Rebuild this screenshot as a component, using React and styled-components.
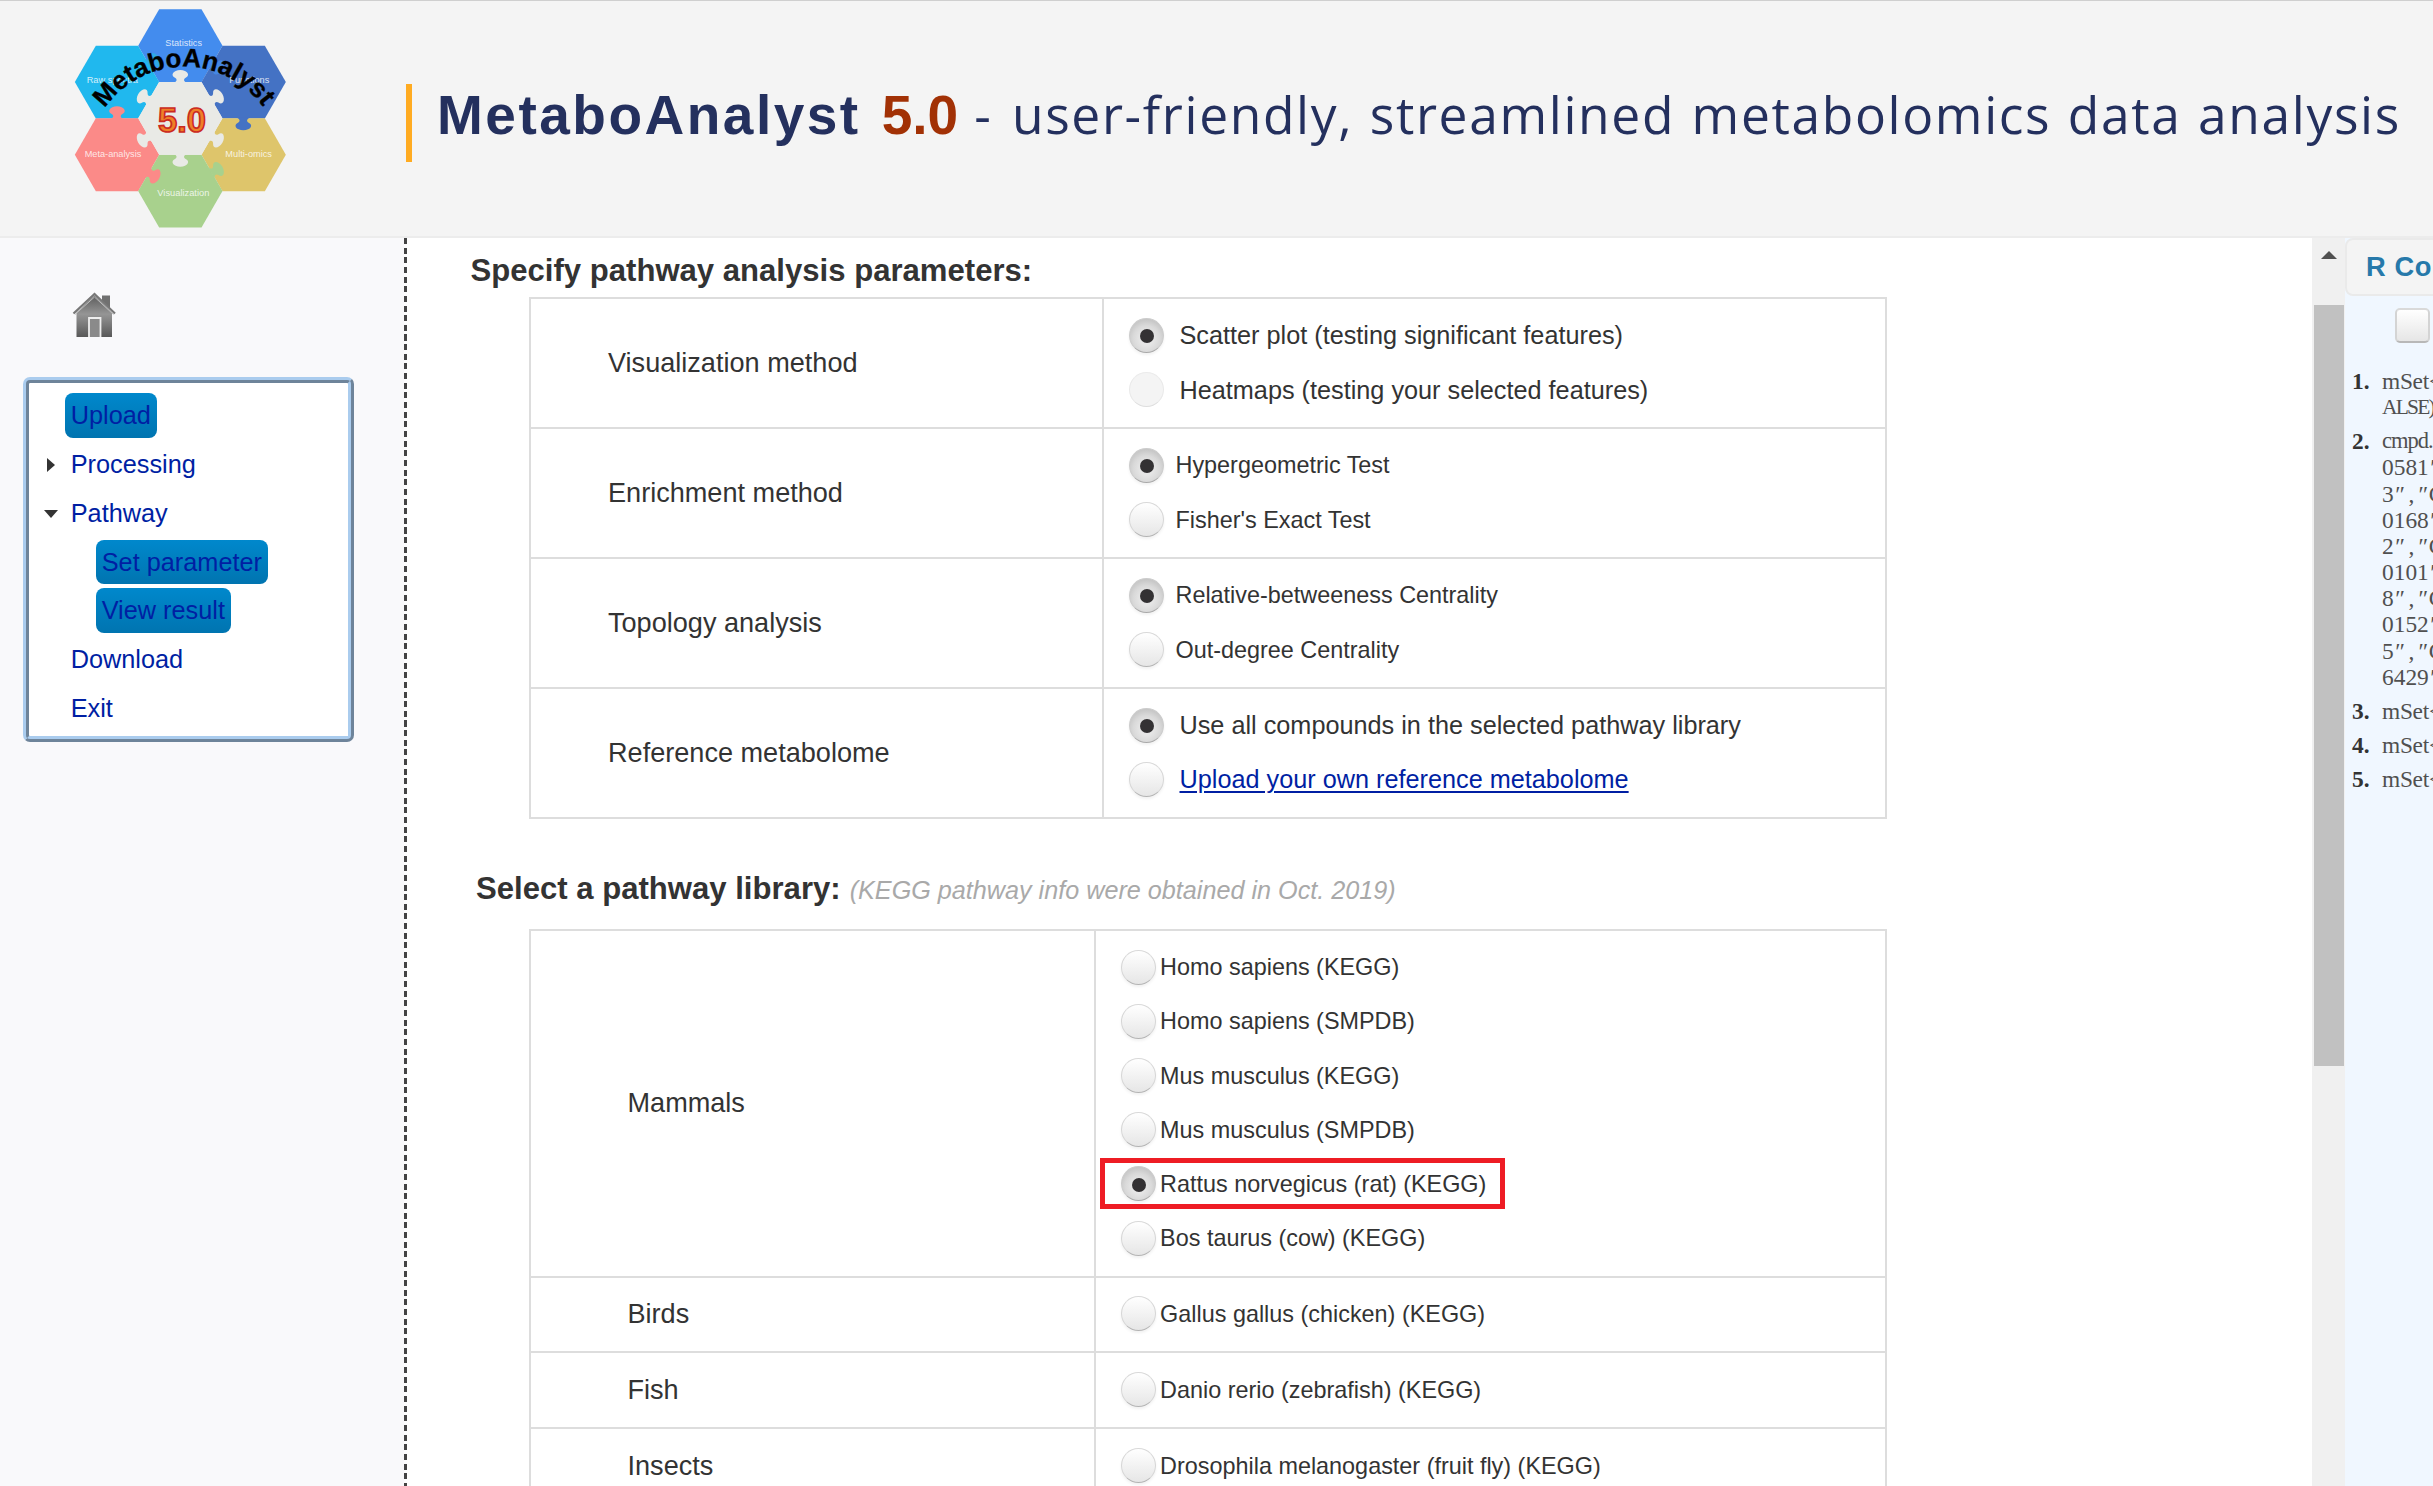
import React from "react";
import styled, { createGlobalStyle } from "styled-components";

const sans = `"Liberation Sans", Arial, Helvetica, sans-serif`;

const GlobalStyle = createGlobalStyle`
  *, *::before, *::after { box-sizing: border-box; }
  body { margin: 0; background: #fff; color: #333; font-family: ${sans}; overflow: hidden; }
`;

const Page = styled.div`
  display: flex;
  flex-direction: column;
  width: 2433px;
  height: 1486px;
  overflow: hidden;
`;

const Header = styled.header`
  display: flex;
  flex: none;
  height: 238px;
  background: #f4f4f4;
  border-top: 1px solid #cfcfcf;
  border-bottom: 2px solid #ececec;
  padding-left: 60px;
`;

const LogoSvg = styled.svg`
  display: block;
  flex: none;
  width: 240px;
  height: 240px;
  margin-top: -1px;
`;

const Title = styled.h1`
  display: flex;
  align-items: baseline;
  height: 78px;
  margin: 83px 0 0 106px;
  padding-left: 25px;
  border-left: 6px solid #ffab21;
  font-size: 55px;
  font-weight: 400;
  line-height: 60px;
  white-space: pre;
  color: #24305e;
`;

const Brand = styled.span`
  font-weight: 700;
  letter-spacing: ${(p) => (p.$accent ? "0" : "2.5px")};
  color: ${(p) => (p.$accent ? "#a23105" : "#24305e")};
  margin-right: ${(p) => (p.$accent ? "16px" : "21px")};
`;

const Tagline = styled.span`
  font-family: "Open Sans", "Noto Sans", sans-serif;
  font-size: 51.5px;
  letter-spacing: 1.65px;
  word-spacing: 1.5px;
`;

const Dash = styled.span`
  margin-right: 3px;
`;

const Body = styled.div`
  display: flex;
  flex: 1;
  min-height: 0;
`;

const Sidebar = styled.aside`
  flex: none;
  width: 404px;
  background: #f9f9fb;
`;

const HomeSvg = styled.svg`
  display: block;
  width: 44px;
  height: 46px;
  margin: 54px 0 0 72px;
`;

const Menu = styled.nav`
  display: flex;
  flex-direction: column;
  width: 331px;
  height: 365px;
  margin: 39px 0 0 23px;
  padding-top: 8px;
  background: #fff;
  border: 6px ridge #aaccee;
  border-radius: 7px;
`;

const MenuRow = styled.div`
  display: flex;
  flex: none;
  align-items: center;
  height: 48.8px;
  padding-left: ${(p) => (p.$nested ? "67px" : "12.5px")};
`;

const Arrow = styled.span`
  display: flex;
  justify-content: center;
  width: 18px;
  margin-right: 5.5px;
`;

const MenuLink = styled.a`
  padding: 0 5.7px;
  height: 44.4px;
  line-height: 44.4px;
  border-radius: 8px;
  font-size: 25.3px;
  color: #001fa3;
  background: ${(p) => (p.$active ? "linear-gradient(#0088cc, #0074b0)" : "none")};
`;

const Divider = styled.div`
  flex: none;
  width: 3px;
  margin-right: 1px;
  background: repeating-linear-gradient(#444 0 6px, #fdfdfe 6px 9.65px);
`;

const Main = styled.main`
  flex: 1;
  min-width: 0;
  padding-top: 15px;
`;

const Heading = styled.h2`
  display: flex;
  align-items: baseline;
  margin: 0;
  padding-left: ${(p) => p.$left}px;
  font-size: 31.1px;
  font-weight: 700;
  line-height: 36px;
  color: #333;
`;

const LibraryHeading = styled(Heading)`
  margin-top: 52px;
`;

const Note = styled.em`
  margin-left: 9px;
  font-size: 25.2px;
  font-weight: 400;
  color: #a9a9a9;
`;

const Table = styled.section`
  width: 1358px;
  margin: ${(p) => p.$top}px 0 0 121px;
  border: 2px solid #ddd;
  border-top: 0;
`;

const Row = styled.div`
  display: grid;
  grid-template-columns: ${(p) => p.$label}px 1fr;
  border-top: 2px solid #ddd;
`;

const Label = styled.div`
  display: flex;
  align-items: center;
  padding: 0 0 0 ${(p) => p.$pad}px;
  border-right: 2px solid #ddd;
  font-size: 27.1px;
`;

const Options = styled.div`
  display: flex;
  flex-direction: column;
  align-items: flex-start;
  padding: 9.3px 0 10.3px 4px;
`;

const Option = styled.label`
  display: flex;
  align-items: center;
  height: ${(p) => (p.$marked ? "50.2px" : "54.2px")};
  margin: ${(p) => (p.$marked ? "1.5px 0 2.5px" : "0")};
  padding: 0 ${(p) => (p.$marked ? "14px" : "0")} 0 ${(p) => (p.$marked ? "15.5px" : "20.5px")};
  border: ${(p) => (p.$marked ? "5px solid #ee1c24" : "0")};
`;

const Radio = styled.span`
  display: grid;
  place-items: center;
  width: 35px;
  height: 35px;
  border-radius: 50%;
  background: ${(p) =>
    p.$checked
      ? "radial-gradient(circle at 50% 60%, #e6e6e6 25%, #d9d9d9 52%, #c6c6c6 75%)"
      : p.$disabled
        ? "#f4f4f4"
        : "linear-gradient(#ffffff, #e6e6e6)"};
  border: 1.5px solid;
  border-color: ${(p) =>
    p.$disabled ? "#ebebeb #e9e9e9 #dedede" : p.$checked ? "#cccccc #cccccc #a8a8a8" : "#d9d9d9 #d6d6d6 #b3b3b3"};
  box-shadow: ${(p) => (p.$disabled ? "none" : "0 2px 3px rgba(0, 0, 0, 0.06)")};

  &::after {
    content: "";
    width: 14px;
    height: 14px;
    margin: 2px 0 0 1px;
    border-radius: 50%;
    background: ${(p) => (p.$checked ? "#333133" : "transparent")};
  }
`;

const OptionText = styled.span`
  margin-left: ${(p) => p.$gap}px;
  font-size: ${(p) => (p.$large ? 25.25 : 23.4)}px;
  line-height: 34px;
  color: ${(p) => (p.$link ? "#001fa3" : "#333")};
  text-decoration: ${(p) => (p.$link ? "underline" : "none")};
  text-decoration-thickness: 2px;
  text-underline-offset: 3px;
`;

const Scrollbar = styled.div`
  display: flex;
  flex: none;
  flex-direction: column;
  align-items: center;
  width: 33px;
  padding: 13px 0 0;
  background: #f0f0f0;
`;

const ScrollUp = styled.div`
  border: 8px solid transparent;
  border-top: 0;
  border-bottom: 8px solid #505050;
`;

const Thumb = styled.div`
  width: 30px;
  height: 761px;
  margin-top: 46px;
  background: #c1c1c1;
`;

const History = styled.aside`
  flex: none;
  width: 88px;
  overflow: hidden;
  background: #f0f7ff;
`;

const HistoryHead = styled.div`
  width: 420px;
  height: 58px;
  padding-left: 19px;
  background: #f4f4f4;
  border: 2px solid #eaeaea;
  border-radius: 8px;
  font-size: 27.3px;
  font-weight: 700;
  line-height: 53px;
  letter-spacing: 0.6px;
  color: #2779aa;
  white-space: nowrap;
`;

const Checkbox = styled.div`
  width: 35px;
  height: 35px;
  margin: 12px 0 0 50px;
  background: linear-gradient(#ffffff, #e6e6e6);
  border: 2px solid;
  border-color: #d9d9d9 #d4d4d4 #b8b8b8;
  border-radius: 5px;
`;

const Commands = styled.ol`
  display: flex;
  flex-direction: column;
  gap: 7.8px;
  margin: 25px 0 0;
  padding: 0;
  list-style: none;
  font-family: "Liberation Serif", "Times New Roman", serif;
  font-size: 23.4px;
  line-height: 26.2px;
`;

const Command = styled.li`
  display: grid;
  grid-template-columns: 37px auto;
  justify-content: start;
`;

const Num = styled.b`
  padding-left: 7px;
  color: #333;
`;

const Line = styled.div`
  height: 26.2px;
  font-size: ${(p) => p.$size || 23.4}px;
  letter-spacing: ${(p) => p.$spacing || 0}px;
  white-space: nowrap;
  color: #505050;
`;

const Mark = styled.span`
  display: inline-block;
  width: 11.7px;
  padding-left: ${(p) => (p.$slant ? 0 : 3)}px;
  font-style: ${(p) => (p.$slant ? "italic" : "normal")};
`;

const knob = "M-20,2 C-8,-2 -10,-10 -16,-13 C-27,-18 -25,-28 -14,-33 C-6,-37 6,-37 14,-33 C25,-28 27,-18 16,-13 C10,-10 8,-2 20,2 Z";

const hexes = [
  { x: 361, y: 137, fill: "#438cee" },
  { x: 171, y: 246, fill: "#20b8ee" },
  { x: 551, y: 246, fill: "#4472c4" },
  { x: 171, y: 464, fill: "#fb8a88" },
  { x: 551, y: 464, fill: "#dec56b" },
  { x: 361, y: 573, fill: "#a8d18d" },
  { x: 361, y: 355, fill: "#e9eae6" },
];

const knobs = [
  [361, 246, 0, "#e9eae6"],
  [361, 464, 180, "#e9eae6"],
  [266, 300, -60, "#e9eae6"],
  [266, 410, -120, "#e9eae6"],
  [456, 300, 60, "#e9eae6"],
  [456, 410, 120, "#e9eae6"],
  [171, 355, 0, "#fb8a88"],
  [550, 355, 180, "#4472c4"],
  [266, 191, 60, "#2fa9e6"],
  [456, 191, 120, "#4587e4"],
  [266, 518, 120, "#fb8a88"],
  [456, 518, 60, "#a8d18d"],
];

const logoLabels = [
  ["Statistics", 316, 139, 110],
  ["Raw spectra", 80, 250, 154],
  ["Functions", 508, 250, 120],
  ["Meta-analysis", 74, 471, 170],
  ["Multi-omics", 496, 470, 140],
  ["Visualization", 292, 588, 156],
];

function Logo() {
  return (
    <LogoSvg viewBox="0 0 720 720">
      {hexes.map((h) => (
        <polygon
          key={`${h.x}-${h.y}`}
          points="-63.5,-109 63.5,-109 126.5,0 63.5,109.5 -63.5,109.5 -126.5,0"
          transform={`translate(${h.x} ${h.y})`}
          fill={h.fill}
        />
      ))}
      {knobs.map(([x, y, r, fill]) => (
        <path key={`${x}-${y}`} d={knob} transform={`translate(${x} ${y}) rotate(${r})`} fill={fill} />
      ))}
      <g fill="#fff" fillOpacity="0.8" fontFamily={sans} fontSize="27">
        {logoLabels.map(([text, x, y, w]) => (
          <text key={text} x={x} y={y} textLength={w} lengthAdjust="spacingAndGlyphs">{text}</text>
        ))}
      </g>
      <path id="arc" d="M134,325 A292,292 0 0 1 616,330 L634,360" fill="none" />
      <text fontFamily={sans} fontWeight="700" fontSize="78" fill="#000" stroke="#000" strokeWidth="1">
        <textPath href="#arc">MetaboAnalyst</textPath>
      </text>
      <text
        x="294" y="395" textLength="144" lengthAdjust="spacingAndGlyphs"
        fontFamily={sans} fontWeight="700" fontSize="106"
        fill="#ee8028" stroke="#cb2a22" strokeWidth="5"
      >
        5.0
      </text>
    </LogoSvg>
  );
}

function Home() {
  return (
    <HomeSvg viewBox="0 0 44 46">
      <defs>
        <linearGradient id="roof" x1="0" y1="0" x2="0" y2="1">
          <stop offset="0" stopColor="#5c5c5c" />
          <stop offset="0.45" stopColor="#959595" />
          <stop offset="1" stopColor="#585858" />
        </linearGradient>
      </defs>
      <path d="M30,3.500h8v14l-8,-8z" fill="#707070" />
      <path d="M4.500,20.500 L22.500,3.500 L40,20.500 V45 H4.500 Z" fill="url(#roof)" />
      <path d="M1.500,21.500 L22.500,2 L43,21.500" fill="none" stroke="#777" strokeWidth="2.200" />
      <path d="M3,22.500 L22.500,5 L41.500,22.500" fill="none" stroke="#bdbdbd" strokeWidth="1" />
      <path d="M17,45 V26 H28.500 V45" fill="#8a8a8a" stroke="#eee" strokeWidth="1.800" />
    </HomeSvg>
  );
}

const menu = [
  { text: "Upload", active: true },
  { text: "Processing", arrow: "right" },
  { text: "Pathway", arrow: "down" },
  { text: "Set parameter", active: true, nested: true },
  { text: "View result", active: true, nested: true },
  { text: "Download" },
  { text: "Exit" },
];

const arrows = { right: "M5,2 L13,9 L5,16 Z", down: "M2,5 H16 L9,13 Z" };

const parameters = [
  {
    label: "Visualization method", large: true,
    options: [
      { text: "Scatter plot (testing significant features)", checked: true },
      { text: "Heatmaps (testing your selected features)", disabled: true },
    ],
  },
  {
    label: "Enrichment method",
    options: [{ text: "Hypergeometric Test", checked: true }, { text: "Fisher's Exact Test" }],
  },
  {
    label: "Topology analysis",
    options: [{ text: "Relative-betweeness Centrality", checked: true }, { text: "Out-degree Centrality" }],
  },
  {
    label: "Reference metabolome", large: true,
    options: [
      { text: "Use all compounds in the selected pathway library", checked: true },
      { text: "Upload your own reference metabolome", link: true },
    ],
  },
];

const libraries = [
  {
    label: "Mammals",
    options: [
      { text: "Homo sapiens (KEGG)" },
      { text: "Homo sapiens (SMPDB)" },
      { text: "Mus musculus (KEGG)" },
      { text: "Mus musculus (SMPDB)" },
      { text: "Rattus norvegicus (rat) (KEGG)", checked: true, marked: true },
      { text: "Bos taurus (cow) (KEGG)" },
    ],
  },
  { label: "Birds", options: [{ text: "Gallus gallus (chicken) (KEGG)" }] },
  { label: "Fish", options: [{ text: "Danio rerio (zebrafish) (KEGG)" }] },
  { label: "Insects", options: [{ text: "Drosophila melanogaster (fruit fly) (KEGG)" }] },
];

const commands = [
  [["mSet<-", -0.3], ["ALSE)", -1.8, 21.5]],
  [["cmpd.", -1, 22.5], ["0581\""], ["3\",\"C"], ["0168\""], ["2\",\"C"], ["0101\""], ["8\",\"C"], ["0152\""], ["5\",\"C"], ["6429\""]],
  [["mSet<-", -0.3]],
  [["mSet<-", -0.3]],
  [["mSet<-", -0.3]],
];

function CommandText({ text }) {
  return text
    .split(/([",])/)
    .filter(Boolean)
    .map((part, i) =>
      part === '"' ? <Mark key={i} $slant>″</Mark> : part === "," ? <Mark key={i}>,</Mark> : part
    );
}

function OptionTable({ rows, top, labelWidth, labelPad, gap }) {
  return (
    <Table $top={top}>
      {rows.map((row) => (
        <Row key={row.label} $label={labelWidth}>
          <Label $pad={labelPad}>{row.label}</Label>
          <Options>
            {row.options.map((o) => (
              <Option key={o.text} $marked={o.marked}>
                <Radio $checked={o.checked} $disabled={o.disabled} />
                <OptionText $gap={gap ?? (row.large ? 16 : 12)} $large={row.large} $link={o.link}>
                  {o.text}
                </OptionText>
              </Option>
            ))}
          </Options>
        </Row>
      ))}
    </Table>
  );
}

export default function App() {
  return (
    <Page>
      <GlobalStyle />
      <Header>
        <Logo />
        <Title>
          <Brand>MetaboAnalyst</Brand>
          <Brand $accent>5.0</Brand>
          <Tagline>
            <Dash>-</Dash> user-friendly, streamlined metabolomics data analysis
          </Tagline>
        </Title>
      </Header>
      <Body>
        <Sidebar>
          <Home />
          <Menu>
            {menu.map((m) => (
              <MenuRow key={m.text} $nested={m.nested}>
                {!m.nested && (
                  <Arrow>
                    {m.arrow && (
                      <svg width="18" height="16" viewBox="0 0 18 16">
                        <path d={arrows[m.arrow]} fill="#333" />
                      </svg>
                    )}
                  </Arrow>
                )}
                <MenuLink $active={m.active}>{m.text}</MenuLink>
              </MenuRow>
            ))}
          </Menu>
        </Sidebar>
        <Divider />
        <Main>
          <Heading $left={62.5}>Specify pathway analysis parameters:</Heading>
          <OptionTable rows={parameters} top={8} labelWidth={573} labelPad={77} />
          <LibraryHeading $left={68}>
            Select a pathway library:
            <Note>(KEGG pathway info were obtained in Oct. 2019)</Note>
          </LibraryHeading>
          <OptionTable rows={libraries} top={21} labelWidth={565} labelPad={96.5} gap={4.6} />
        </Main>
        <Scrollbar>
          <ScrollUp />
          <Thumb />
        </Scrollbar>
        <History>
          <HistoryHead>R Command History</HistoryHead>
          <Checkbox />
          <Commands>
            {commands.map((lines, i) => (
              <Command key={i}>
                <Num>{i + 1}.</Num>
                <div>
                  {lines.map(([text, spacing, size], j) => (
                    <Line key={j} $spacing={spacing} $size={size}>
                      <CommandText text={text} />
                    </Line>
                  ))}
                </div>
              </Command>
            ))}
          </Commands>
        </History>
      </Body>
    </Page>
  );
}
